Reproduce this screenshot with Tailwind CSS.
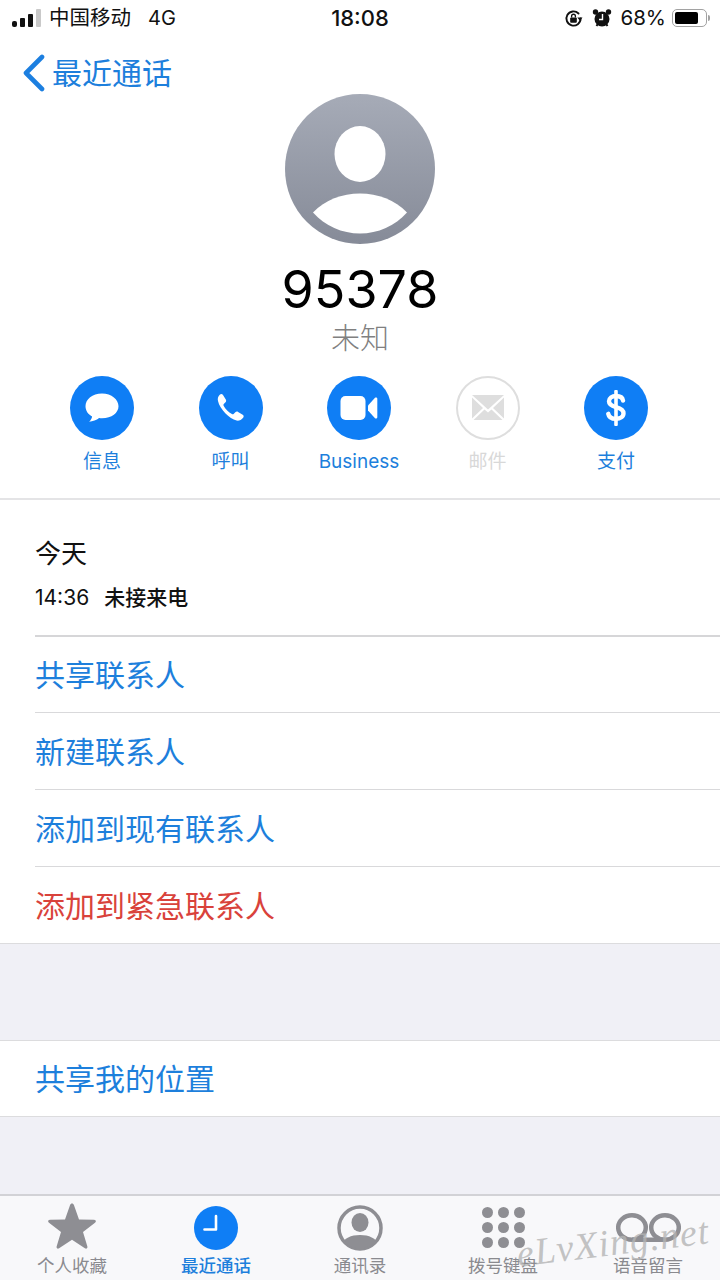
<!DOCTYPE html>
<html lang="zh">
<head>
  <meta charset="UTF-8">
  <meta name="viewport" content="width=device-width, initial-scale=1">
  <title>最近通话</title>
  <script src="https://cdn.jsdelivr.net/npm/@tailwindcss/browser@4"></script>
</head>
<body class="font-['Inter','Noto_Sans_CJK_SC',sans-serif] bg-[#f0f0f6]">
  <div class="relative w-[720px] h-[1280px] overflow-hidden flex flex-col">

    <!-- top part, white -->
    <div class="bg-white h-[500px] border-b-2 border-[#e4e4e6] flex flex-col">
      <!-- status bar -->
      <div class="h-[36px] flex items-center justify-between pl-[12px] pr-[10px] text-[#111] relative">
        <div class="flex items-center">
          <div class="flex items-end gap-[3px] h-[18px]">
            <div class="w-[5px] h-[6px] rounded-[2px] bg-[#111]"></div>
            <div class="w-[5px] h-[9px] rounded-[1px] bg-[#111]"></div>
            <div class="w-[5px] h-[13px] rounded-[1px] bg-[#111]"></div>
            <div class="w-[5px] h-[18px] rounded-[1px] bg-[#c9c9c9]"></div>
          </div>
          <span class="ml-[8px] text-[20.500px] leading-none">中国移动</span>
          <span class="ml-[17px] text-[20px] leading-none">4G</span>
        </div>
        <div class="absolute left-0 right-0 text-center text-[22px] font-medium pointer-events-none">18:08</div>
        <div class="flex items-center">
          <svg class="w-[19px] h-[19px]" viewBox="0 0 20 20" fill="none">
            <path d="M17.500 10a7.500 7.500 0 1 1-2.200-5.300" stroke="#111" stroke-width="2" stroke-linecap="round"/>
            <path d="M14 9h5.500l-2.700 3.400z" fill="#111"/>
            <rect x="6.500" y="9" width="7" height="5.500" rx="1" fill="#111"/>
            <path d="M8 9V7.500a2 2 0 0 1 4 0V9" stroke="#111" stroke-width="1.400"/>
          </svg>
          <svg class="ml-[9px] w-[20px] h-[20px]" viewBox="0 0 20 20">
            <circle cx="10" cy="11" r="7.500" fill="#111"/>
            <circle cx="3.500" cy="4" r="2.700" fill="#111"/>
            <circle cx="16.500" cy="4" r="2.700" fill="#111"/>
            <path d="M4.500 18l2-3M15.500 18l-2-3" stroke="#111" stroke-width="2"/>
            <path d="M10.500 6v5.500H7" stroke="#fff" stroke-width="1.400" fill="none"/>
          </svg>
          <span class="ml-[8px] text-[20.500px] leading-none">68%</span>
          <div class="ml-[6px] w-[35px] h-[18px] rounded-[5px] border-[1.5px] border-[#a2a2a2] p-[2px]">
            <div class="w-[23px] h-full rounded-[2px] bg-black"></div>
          </div>
          <div class="ml-[1px] w-[2px] h-[6px] rounded-r-[2px] bg-[#a2a2a2]"></div>
        </div>
      </div>

      <!-- back link -->
      <div class="h-[58px] pt-[16px] flex items-center pl-[22px] text-[#1d7fdc]">
        <svg class="w-[24px] h-[38px]" viewBox="0 0 24 38" fill="none">
          <path d="M20 3 4 19l16 16" stroke="#1c7fe0" stroke-width="4.600" stroke-linecap="round" stroke-linejoin="round"/>
        </svg>
        <span class="ml-[6px] text-[30px] leading-none">最近通话</span>
      </div>

      <!-- avatar -->
      <div class="flex justify-center">
        <svg class="w-[150px] h-[150px]" viewBox="0 0 150 150">
          <defs>
            <linearGradient id="avatarBg" x1="0" y1="0" x2="0" y2="1">
              <stop offset="0" stop-color="#a6abb7"/>
              <stop offset="1" stop-color="#868b98"/>
            </linearGradient>
          </defs>
          <circle cx="75" cy="75" r="75" fill="url(#avatarBg)"/>
          <ellipse cx="75" cy="60" rx="25.500" ry="28" fill="#fff"/>
          <path d="M28 118.500C40 106 57 99.500 75 99.500s35 6.500 47 19C110 132 93 139.500 75 139.500S40 132 28 118.500Z" fill="#fff"/>
        </svg>
      </div>

      <!-- number and label -->
      <div class="mt-[15px] text-center text-[52px] leading-[62px] text-black">95378</div>
      <div class="text-center text-[29px] leading-[36px] font-light text-[#808080]">未知</div>

      <!-- action buttons -->
      <div class="mt-[19px] pr-[2px] flex justify-center gap-[64.500px]">
        <div class="w-[64px] flex flex-col items-center">
          <div class="w-[64px] h-[64px] shrink-0 rounded-full bg-[#0f7ef5] flex items-center justify-center">
            <svg class="w-[36px] h-[36px]" viewBox="0 0 36 36">
              <path d="M18 3.500C8.300 3.500 1.500 9.300 1.500 16.200c0 4.300 2.500 8 6.600 10.200-.3 1.900-1.400 3.900-3 5.300 3.700-.2 7.500-1.700 10-3.700 1 .2 1.900.2 2.900.2 9.700 0 16.500-5.500 16.500-12S27.700 3.500 18 3.500Z" fill="#fff"/>
            </svg>
          </div>
          <span class="mt-[11px] text-[19px] leading-[22px] text-[#1d7fdc] whitespace-nowrap">信息</span>
        </div>
        <div class="w-[64px] flex flex-col items-center">
          <div class="w-[64px] h-[64px] shrink-0 rounded-full bg-[#0f7ef5] flex items-center justify-center">
            <svg class="w-[32px] h-[32px]" viewBox="0 0 32 32">
              <path d="M5 2.500c1-.8 2.300-.7 3 .4l2.800 4.600c.6 1 .4 2-.3 2.800l-1.700 1.700c-.5.500-.5 1.100-.2 1.700 1.800 3.200 5 6.600 8.300 8.400.6.300 1.200.3 1.700-.2l1.700-1.700c.8-.7 1.900-.9 2.800-.3l4.600 2.800c1.100.7 1.300 2 .4 3-1.700 2-4 3.300-6.500 2.900C14.500 27 4.800 17.300 3 9.100 2.400 6.500 3 4.200 5 2.500Z" fill="#fff"/>
            </svg>
          </div>
          <span class="mt-[11px] text-[19px] leading-[22px] text-[#1d7fdc] whitespace-nowrap">呼叫</span>
        </div>
        <div class="w-[64px] flex flex-col items-center">
          <div class="w-[64px] h-[64px] shrink-0 rounded-full bg-[#0f7ef5] flex items-center justify-center">
            <svg class="w-[38px] h-[26px]" viewBox="0 0 38 26">
              <rect x="0.500" y="1" width="25" height="24" rx="5" fill="#fff"/>
              <path d="M28 10.500 35 2.800c.8-.8 2.300-.3 2.300.9v18.600c0 1.200-1.500 1.700-2.300.9l-7-7.700Z" fill="#fff"/>
            </svg>
          </div>
          <span class="mt-[11px] text-[19px] leading-[22px] text-[#1d7fdc] whitespace-nowrap">Business</span>
        </div>
        <div class="w-[64px] flex flex-col items-center">
          <div class="w-[64px] h-[64px] shrink-0 rounded-full border-2 border-[#dedede] flex items-center justify-center">
            <svg class="w-[32px] h-[26px]" viewBox="0 0 32 26">
              <path d="M0 0h32L16 14.500Z" fill="#dedede"/>
              <path d="M0 2.500v21L11 13ZM32 2.500v21L21 13Z" fill="#dedede"/>
              <path d="M1.500 25h29L19.500 14.500 16 17.500l-3.500-3Z" fill="#dedede"/>
            </svg>
          </div>
          <span class="mt-[11px] text-[19px] leading-[22px] text-[#d8d8d8] whitespace-nowrap">邮件</span>
        </div>
        <div class="w-[64px] flex flex-col items-center">
          <div class="w-[64px] h-[64px] shrink-0 rounded-full bg-[#0f7ef5] flex items-center justify-center">
            <svg class="w-[20px] h-[36px]" viewBox="0 0 20 36" fill="none">
              <path d="M10 1.500v33" stroke="#fff" stroke-width="3.600" stroke-linecap="round"/>
              <path d="M17 10.500C16.500 7.500 13.800 6 10 6 6 6 3 8 3 11.300c0 3.200 2.800 4.700 7 5.800 4.600 1.200 7.500 2.700 7.500 6.200 0 3.400-3.200 5.500-7.500 5.500-4.200 0-7.200-1.800-7.700-5" stroke="#fff" stroke-width="4.400" stroke-linecap="round"/>
            </svg>
          </div>
          <span class="mt-[11px] text-[19px] leading-[22px] text-[#1d7fdc] whitespace-nowrap">支付</span>
        </div>
      </div>
    </div>

    <!-- call history -->
    <div class="bg-white h-[135px] pl-[35px] pt-[36px]">
      <div class="text-[26px] leading-[36px] text-[#111]">今天</div>
      <div class="mt-[12px] flex items-center text-[21px] leading-[28px] text-[#111]">
        <span>14:36</span>
        <span class="ml-[15px] font-medium">未接来电</span>
      </div>
    </div>

    <!-- actions list -->
    <div class="bg-white pl-[35px] text-[30px] border-b border-[#dcdcde]">
      <div class="h-[77px] pt-[1px] flex items-center text-[#1d7fdc] border-t-2 border-[#d6d6d8]">共享联系人</div>
      <div class="h-[77px] pt-[2px] flex items-center text-[#1d7fdc] border-t border-[#d9d9db]">新建联系人</div>
      <div class="h-[77px] pt-[2px] flex items-center text-[#1d7fdc] border-t border-[#d9d9db]">添加到现有联系人</div>
      <div class="h-[77px] pt-[2px] flex items-center text-[#d9423b] border-t border-[#d9d9db]">添加到紧急联系人</div>
    </div>

    <!-- location -->
    <div class="mt-[96px] bg-white h-[77px] pt-[2px] pl-[35px] flex items-center text-[30px] text-[#1d7fdc] border-y border-[#dcdcde]">共享我的位置</div>

    <!-- tab bar -->
    <div class="mt-auto h-[86px] bg-[#f8f8fa] border-t-2 border-[#d2d2d6] flex">
      <div class="w-[144px] flex flex-col items-center">
        <svg class="mt-[7px] w-[48px] h-[46px]" viewBox="0 0 48 46">
          <path d="M24 0.500c1 0 1.600.6 2 1.700l5 14.200 15 .4c2 .1 2.500 1.800 1 3L35 29l4.300 14.300c.6 1.900-.9 3-2.400 1.900L24 36.700l-12.900 8.500c-1.500 1.100-3 0-2.400-1.900L13 29 1 19.800c-1.500-1.200-1-2.900 1-3l15-.4 5-14.200c.4-1.100 1-1.700 2-1.700Z" fill="#8e8e93"/>
        </svg>
        <span class="mt-[6px] text-[17.500px] leading-[22px] text-[#8a8a8f]">个人收藏</span>
      </div>
      <div class="w-[144px] flex flex-col items-center">
        <svg class="mt-[10px] w-[44px] h-[44px]" viewBox="0 0 44 44" fill="none">
          <circle cx="22" cy="22" r="22" fill="#0f7ef5"/>
          <path d="M22 10v13.500H10.500" stroke="#fff" stroke-width="2.600" stroke-linecap="round" stroke-linejoin="round"/>
        </svg>
        <span class="mt-[5px] text-[17.500px] leading-[22px] font-medium text-[#1d7fdc]">最近通话</span>
      </div>
      <div class="w-[144px] flex flex-col items-center">
        <svg class="mt-[9px] w-[46px] h-[46px]" viewBox="0 0 46 46" fill="none">
          <defs><clipPath id="contactClip"><circle cx="23" cy="23" r="20.500"/></clipPath></defs>
          <circle cx="23" cy="23" r="21" stroke="#8e8e93" stroke-width="3.500"/>
          <g clip-path="url(#contactClip)" fill="#8e8e93">
            <ellipse cx="23" cy="17.500" rx="8.500" ry="9.500"/>
            <path d="M4 40c3-7 10-10 19-10s16 3 19 10v8H4Z"/>
          </g>
        </svg>
        <span class="mt-[4px] text-[17.500px] leading-[22px] text-[#8a8a8f]">通讯录</span>
      </div>
      <div class="w-[144px] flex flex-col items-center">
        <div class="mt-[11px] -ml-[2px] grid grid-cols-3 gap-x-[5px] gap-y-[4px]">
          <div class="w-[11px] h-[11px] rounded-full bg-[#8e8e93]"></div>
          <div class="w-[11px] h-[11px] rounded-full bg-[#8e8e93]"></div>
          <div class="w-[11px] h-[11px] rounded-full bg-[#8e8e93]"></div>
          <div class="w-[11px] h-[11px] rounded-full bg-[#8e8e93]"></div>
          <div class="w-[11px] h-[11px] rounded-full bg-[#8e8e93]"></div>
          <div class="w-[11px] h-[11px] rounded-full bg-[#8e8e93]"></div>
          <div class="w-[11px] h-[11px] rounded-full bg-[#8e8e93]"></div>
          <div class="w-[11px] h-[11px] rounded-full bg-[#8e8e93]"></div>
          <div class="w-[11px] h-[11px] rounded-full bg-[#8e8e93]"></div>
        </div>
        <span class="mt-[7px] -ml-[2px] text-[17.500px] leading-[22px] text-[#8a8a8f]">拨号键盘</span>
      </div>
      <div class="w-[144px] flex flex-col items-center">
        <svg class="mt-[17px] w-[65px] h-[29px]" viewBox="0 0 65 29" fill="none" stroke="#8e8e93" stroke-width="4.500">
          <ellipse cx="16" cy="14.500" rx="13.800" ry="12.200"/>
          <ellipse cx="49" cy="14.500" rx="13.800" ry="12.200"/>
          <path d="M16 26.700h33"/>
        </svg>
        <span class="mt-[13px] text-[17.500px] leading-[22px] text-[#8a8a8f]">语音留言</span>
      </div>
    </div>

    <!-- watermark -->
    <div class="absolute left-[516px] top-[1222px] font-['Liberation_Serif',serif] italic text-[38px] leading-[40px] tracking-[1px] text-[#b4b4b4]/80 -rotate-[7deg] whitespace-nowrap">eLvXing.net</div>
  </div>
</body>
</html>
